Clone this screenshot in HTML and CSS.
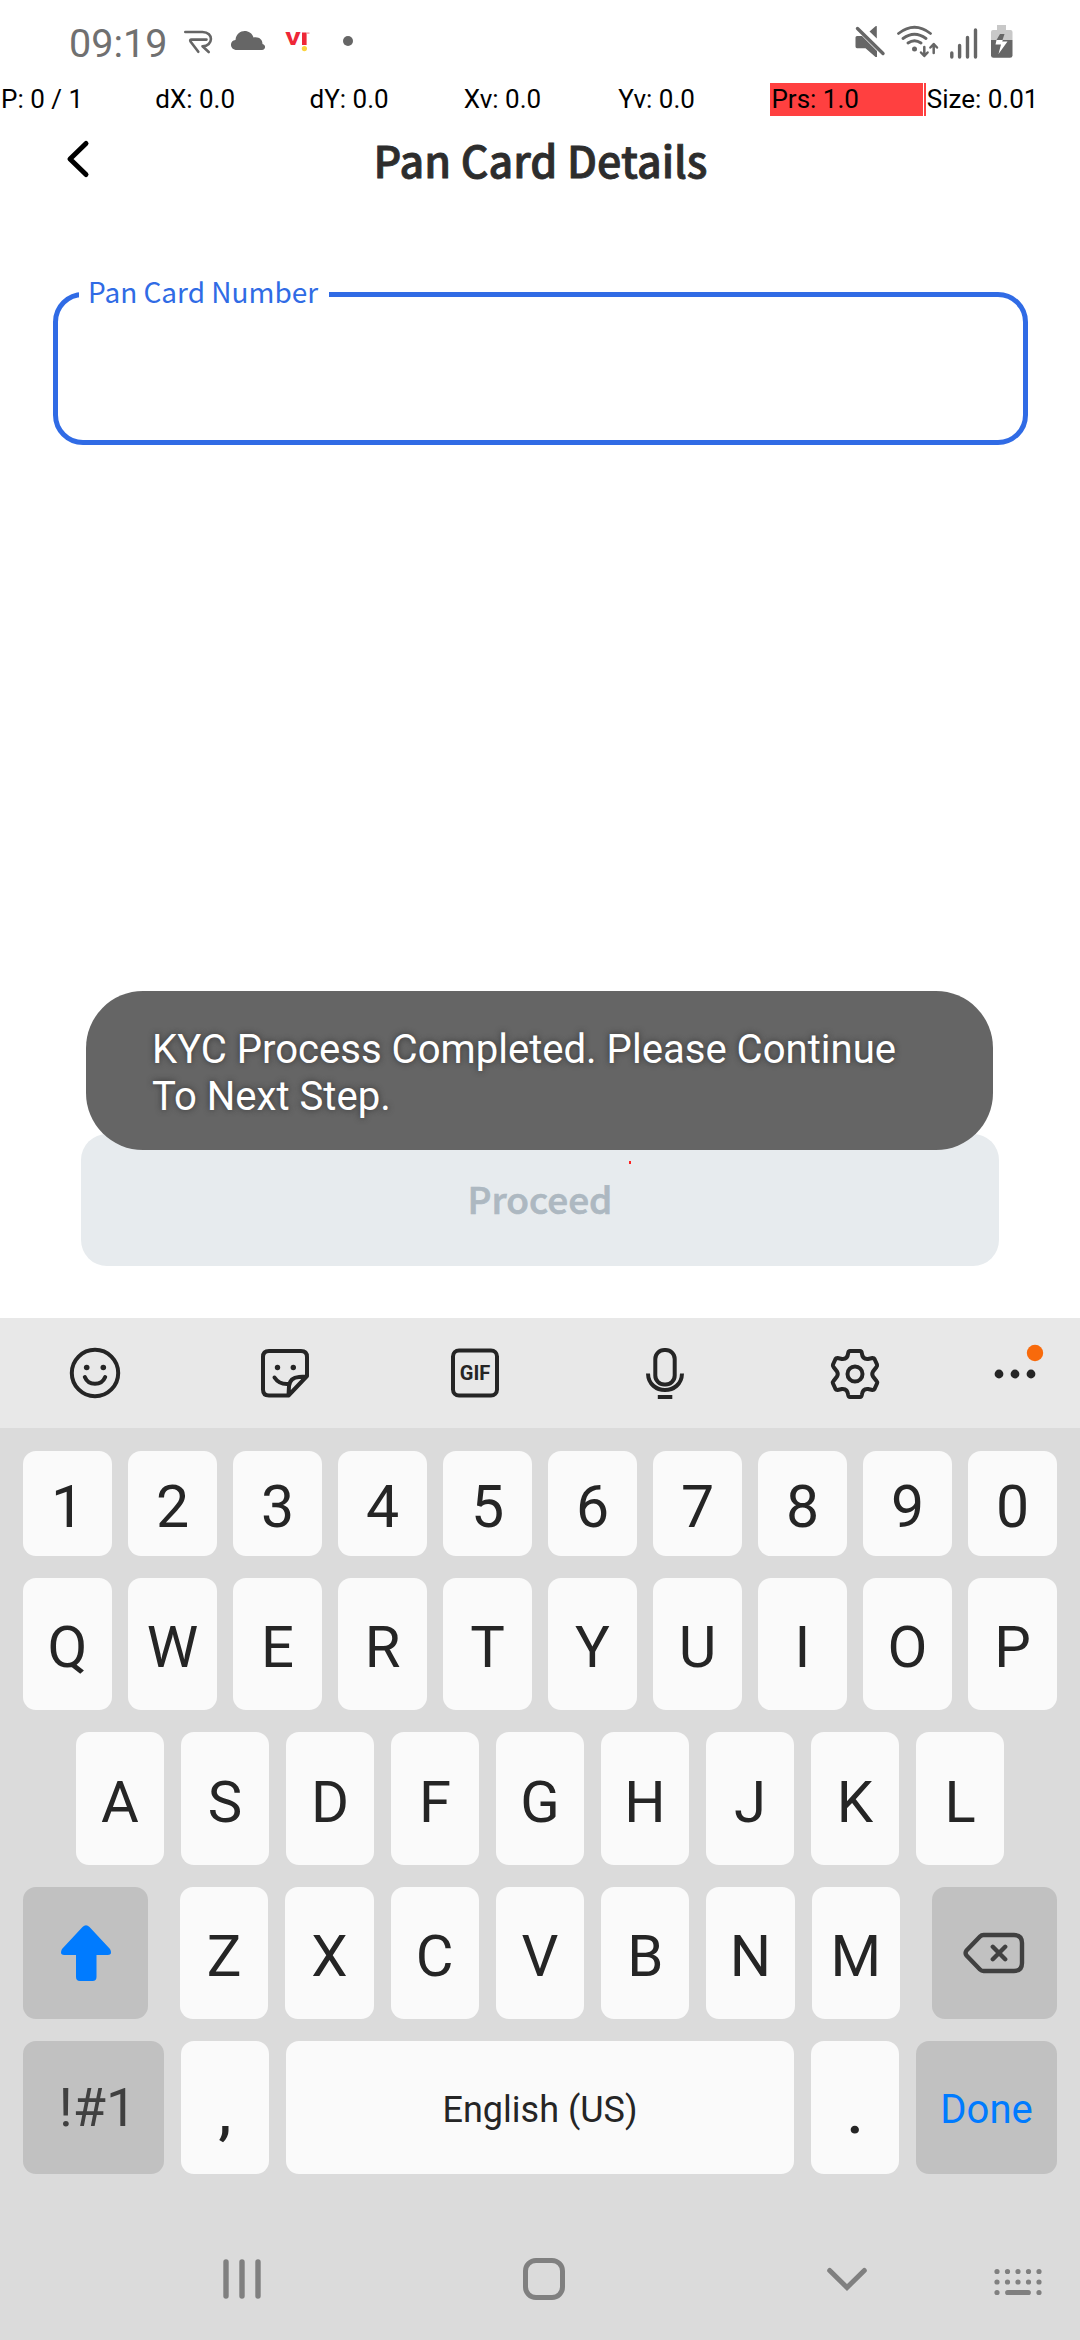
FILE: index.html
```html
<!DOCTYPE html>
<html lang="en">
<head>
<meta charset="utf-8">
<title>Pan Card Details</title>
<link rel="stylesheet" href="styles.css">
</head>
<body>
<div class="screen">
  <div class="status">
    <span class="time">09:19</span>
    <svg class="ic-r" width="32" height="28" viewBox="182 28 32 28" fill="none" stroke="#666" stroke-width="2.6" stroke-linecap="round" stroke-linejoin="round"><path d="M185.300 32H202.500C214 32 213.500 46 202.500 46.300L208.700 52M206.500 39.600H191.500Q189.500 39.600 190.500 41.500L198.300 51.800"/></svg>
    <svg class="ic-cloud" width="36" height="28" viewBox="230 28 36 28" fill="#666"><path d="M237 50C229.500 50 229 40.500 235.500 40C236.500 28.500 251 28.500 253.500 37.500C259 36.500 262.500 39.500 262.500 44C266.500 45 265.500 50 262 50Z"/></svg>
    <svg class="ic-vi" width="28" height="28" viewBox="284 28 28 28"><text class="vi-v" x="285.500" y="45.300" textLength="15" lengthAdjust="spacingAndGlyphs">V</text><rect x="302" y="32.500" width="4.600" height="12.500" fill="#ee2737"/><rect x="307" y="32.500" width="2.500" height="1.200" fill="#f08a92"/><circle cx="304.400" cy="48.600" r="2.600" fill="#fbd33c"/></svg>
    <svg class="ic-dot" width="12" height="28" viewBox="342 28 12 28"><circle cx="348" cy="41" r="5" fill="#666"/></svg>
    <div class="status-right">
      <svg width="34" height="36" viewBox="852 24 34 36" fill="#666"><path d="M855.500 37.500Q855.500 36 857 36H862L877 51V57L875.500 57L865.500 48.300H857Q855.500 48.300 855.500 46.500ZM876.800 26V38.500L869.500 31.500L875.500 26.300Z"/><path d="M860 27L885.500 52" stroke="#fff" stroke-width="2"/><path d="M857.500 28.500L883 53.500" stroke="#666" stroke-width="3.400" stroke-linecap="round"/></svg>
      <svg class="ic-wifi" width="48" height="36" viewBox="894 24 48 36" fill="none" stroke="#666" stroke-width="2.800" stroke-linecap="round"><path d="M898.500 33.500Q914.500 21 930.500 33.500M903 38.500Q914.500 30 926 38.500M908 43Q914.500 38.500 921 43"/><circle cx="914.500" cy="49" r="2.500" fill="#666" stroke="none"/><path d="M924.300 47V55M921 52.500L924.300 56L927.600 52.500M933.700 53V45M930.400 47.500L933.700 44L937 47.500" stroke-width="2.500" stroke-linejoin="round"/></svg>
      <svg class="ic-signal" width="32" height="36" viewBox="948 24 32 36" stroke="#666" stroke-width="3.400" stroke-linecap="round"><path d="M951.800 53V57M959.600 45.500V57M967.500 37.500V57M975.500 30V57"/></svg>
      <svg class="ic-battery" width="27" height="36" viewBox="988 24 27 36"><path d="M997 25H1006V30H1010.500Q1012.500 30 1012.500 32V40H991V32Q991 30 993 30H997Z" fill="#c8c8c8"/><path d="M991 40H1012.500V55.500Q1012.500 57.700 1010 57.700H993.500Q991 57.700 991 55.500Z" fill="#666"/><path d="M1000 34H1004.500L1002.500 40H996.500Z" fill="#666"/><path d="M996.500 40L995.500 44.500H1001L998.500 54L1007.500 41.500H1002.200L1002.800 40Z" fill="#fff"/></svg>
    </div>
  </div>

  <div class="pointer">
    <span>P: 0 / 1</span><span>dX: 0.0</span><span>dY: 0.0</span><span>Xv: 0.0</span><span>Yv: 0.0</span><span class="prs">Prs: 1.0</span><span>Size: 0.01</span>
  </div>

  <header class="header">
    <svg class="back" width="28" height="42" viewBox="64 138 28 42" fill="none" stroke="#000" stroke-width="5" stroke-linecap="round" stroke-linejoin="round"><path d="M86 143.500L70 159L86 174.500"/></svg>
    <h1>Pan Card Details</h1>
  </header>

  <main class="content">
    <div class="field"><label class="label">Pan Card Number</label></div>
    <div class="proceed">Proceed</div>
    <div class="toast">KYC Process Completed. Please Continue To Next Step.</div>
    <i class="touch"></i>
  </main>

  <section class="keyboard">
    <div class="tools">
      <svg width="190" height="110" viewBox="0 1318 190 110" fill="none" stroke="#252525" stroke-width="4" stroke-linecap="round"><circle cx="95" cy="1373" r="23.200"/><path d="M84.800 1377C88.500 1386 101.500 1386 105.200 1377"/><g fill="#252525" stroke="none"><circle cx="86.700" cy="1367.500" r="2.800"/><circle cx="103.300" cy="1367.500" r="2.800"/></g></svg>
      <svg width="190" height="110" viewBox="190 1318 190 110" fill="none" stroke="#252525" stroke-width="4" stroke-linecap="round" stroke-linejoin="round"><path d="M288.500 1395.500H269Q263 1395.500 263 1389.500V1357Q263 1351 269 1351H301Q307 1351 307 1357V1376L288.500 1395.500L289 1386Q290 1377.500 299 1377L306 1376.500M274.500 1377.500Q279 1384.500 288 1384"/><g fill="#252525" stroke="none"><circle cx="277.500" cy="1367.500" r="2.700"/><circle cx="293.300" cy="1367.500" r="2.700"/></g></svg>
      <svg width="190" height="110" viewBox="380 1318 190 110"><rect x="453" y="1350.500" width="44" height="45" rx="6" fill="none" stroke="#252525" stroke-width="4"/><text class="gif" x="475" y="1380" text-anchor="middle">GIF</text></svg>
      <svg width="190" height="110" viewBox="570 1318 190 110" fill="none" stroke="#252525" stroke-width="4"><rect x="655.300" y="1350" width="19.400" height="34.500" rx="9"/><path d="M648 1373.500C648.500 1395.500 681.500 1395.500 682 1373.500M657.800 1397H672.300"/></svg>
      <svg width="190" height="110" viewBox="760 1318 190 110" fill="none" stroke="#252525" stroke-width="4" stroke-linejoin="round"><circle cx="855" cy="1374" r="7.500"/><path d="M850 1351H860Q861.500 1351 861.800 1353Q862.500 1359.500 868 1359L872.500 1358Q874 1358 874.500 1359L877 1364.500Q877.500 1366 876.500 1367L873 1371.500Q871.500 1374 873 1376.500L876.500 1381Q877.500 1382 877 1383.500L874.500 1389Q874 1390 872.500 1390L868 1389Q862.500 1388.500 861.800 1395Q861.500 1397 860 1397H850Q848.500 1397 848.200 1395Q847.500 1388.500 842 1389L837.500 1390Q836 1390 835.500 1389L833 1383.500Q832.500 1382 833.500 1381L837 1376.500Q838.500 1374 837 1371.500L833.500 1367Q832.500 1366 833 1364.500L835.500 1359Q836 1358 837.500 1358L842 1359Q847.500 1359.500 848.200 1353Q848.500 1351 850 1351Z"/></svg>
      <svg width="130" height="110" viewBox="950 1318 130 110" fill="#252525"><circle cx="999" cy="1374" r="4.400"/><circle cx="1015" cy="1374" r="4.400"/><circle cx="1031" cy="1374" r="4.400"/><circle cx="1035" cy="1353" r="8.200" fill="#f86a0b"/></svg>
    </div>
    <div class="keys">
      <div class="row digits"><b>1</b><b>2</b><b>3</b><b>4</b><b>5</b><b>6</b><b>7</b><b>8</b><b>9</b><b>0</b></div>
      <div class="row top"><b>Q</b><b>W</b><b>E</b><b>R</b><b>T</b><b>Y</b><b>U</b><b>I</b><b>O</b><b>P</b></div>
      <div class="row home"><b>A</b><b>S</b><b>D</b><b>F</b><b>G</b><b>H</b><b>J</b><b>K</b><b>L</b></div>
      <div class="row bottom">
        <b class="fn shift"><svg width="56" height="60" viewBox="57.500 1924 56 60" fill="#007bff"><path d="M82 1928Q85.500 1924.500 89 1928L109.500 1950Q112.500 1955.500 107.500 1956H96V1978Q96 1982 92 1982H79.500Q75.500 1982 75.500 1978V1956H63.500Q58.500 1955.500 61.500 1950Z"/></svg></b>
        <b>Z</b><b>X</b><b>C</b><b>V</b><b>B</b><b>N</b><b>M</b>
        <b class="fn erase"><svg width="66" height="46" viewBox="961.500 1930 66 46" fill="none" stroke="#404040" stroke-width="4.400" stroke-linecap="round" stroke-linejoin="round"><path d="M984 1935H1014.500Q1022.500 1935 1022.500 1943V1963Q1022.500 1971 1014.500 1971H984Q982 1971 980.500 1969.500L967 1955.500Q965.200 1953 967 1950.500L980.500 1936.500Q982 1935 984 1935ZM993.300 1946.800L1005.700 1959.200M1005.700 1946.800L993.300 1959.200"/></svg></b>
      </div>
      <div class="row last"><b class="fn sym">!#1</b><b class="punct">,</b><b class="space">English (US)</b><b class="punct">.</b><b class="fn done">Done</b></div>
    </div>
    <nav class="nav">
      <svg width="48" height="60" viewBox="218 2249 48 60" stroke="#808080" stroke-width="5.400" stroke-linecap="round"><path d="M226 2262V2296M242 2262V2296M258 2262V2296"/></svg>
      <svg class="n-home" width="60" height="60" viewBox="514 2249 60 60"><rect x="525.500" y="2260.500" width="37" height="37" rx="10.500" fill="none" stroke="#808080" stroke-width="5"/></svg>
      <svg class="n-down" width="60" height="60" viewBox="817 2249 60 60" fill="none" stroke="#808080" stroke-width="5" stroke-linecap="round"><path d="M829.700 2270.500L847 2287.500L864.300 2270.500"/></svg>
      <svg class="n-kb" width="60" height="60" viewBox="988 2249 60 60" fill="none" stroke="#808080" stroke-width="5.200" stroke-linecap="round"><path d="M997 2271.500h0M1007.500 2271.500h0M1018 2271.500h0M1028.500 2271.500h0M1039 2271.500h0M997 2282h0M1007.500 2282h0M1018 2282h0M1028.500 2282h0M1039 2282h0M997 2292.500h0M1007.700 2292.500H1028.300M1039 2292.500h0"/></svg>
    </nav>
  </section>
</div>
</body>
</html>
```
FILE: styles.css
```css
* { box-sizing: border-box; }
body { margin: 0; background: #fff; font-family: Roboto, sans-serif; }
svg { display: block; flex: none; }

.screen {
  width: 1080px;
  height: 2340px;
  display: flex;
  flex-direction: column;
  overflow: hidden;
}

/* status bar */
.status {
  height: 83px;
  display: flex;
  align-items: flex-start;
  padding: 24px 65px 0 69px;
}
.time {
  width: 113px;
  font-size: 39.5px;
  line-height: 39px;
  font-weight: 400;
  color: #707070;
}
.ic-r, .ic-cloud, .ic-vi, .ic-dot { margin-top: 4px; }
.ic-cloud { margin-left: 16px; }
.ic-vi { margin-left: 18px; }
.ic-dot { margin-left: 30px; }
.vi-v { font: 900 17.5px Roboto, sans-serif; fill: #ee2737; }
.gif { font: 700 20px Roboto, sans-serif; fill: #252525; }
.status-right { margin-left: auto; display: flex; }
.ic-wifi { margin-left: 8px; }
.ic-signal { margin-left: 6px; }
.ic-battery { margin-left: 8px; }

/* pointer read-out strip */
.pointer {
  height: 32px;
  display: grid;
  grid-template-columns: repeat(7, 1fr);
  font-size: 26px;
  line-height: 33px;
  color: #000;
  white-space: nowrap;
}
.pointer span { padding-left: 1px; }
.pointer .prs {
  background: linear-gradient(90deg, #ff4040 153px, #fff 153px, #fff 154px, #ff4040 154px);
  margin-left: -1px;
}

.header {
  height: 93px;
  display: flex;
  align-items: flex-start;
  padding: 23px 64px 0;
}
.header h1 {
  flex: 1;
  margin: -4px 27px 0 0;
  text-align: center;
  font: 500 43px/50px "Noto Sans CJK SC", sans-serif;
  -webkit-text-stroke: 0.8px #2d2d2d;
  color: #2d2d2d;
}

.content {
  position: relative;
  height: 1110px;
  padding: 84px 52px 52px 53px;
  display: flex;
  flex-direction: column;
  justify-content: space-between;
}
.field {
  height: 153px;
  border: 5px solid #306be5;
  border-radius: 30px;
}
.label {
  display: block;
  width: 250px;
  margin: -26px 0 0 21px;
  padding-left: 9px;
  background: #fff;
  font: 400 28px/40px "Noto Sans CJK SC", sans-serif;
  color: #306be5;
  white-space: nowrap;
}
.proceed {
  height: 132px;
  margin: 0 29px 0 28px;
  border-radius: 26px;
  background: #e7ebee;
  color: #adb8c1;
  text-align: center;
  font: 500 37px/128px "Noto Sans CJK SC", sans-serif;
  -webkit-text-stroke: 0.7px #adb8c1;
}
.toast {
  position: absolute;
  left: 86px;
  top: 783px;
  width: 907px;
  height: 159px;
  padding: 35px 66px;
  border-radius: 57px;
  background: #656565;
  color: #fff;
  font-size: 40.100px;
  line-height: 47px;
  text-shadow: 0 0 6px #333;
}
.touch {
  position: absolute;
  left: 629px;
  top: 953px;
  width: 2px;
  height: 3px;
  background: #f22;
}

/* keyboard */
.keyboard { flex: 1; background: #dbdbdb; display: flex; flex-direction: column; }
.tools { height: 110px; display: flex; background: #e8e8e8; }
.keys {
  padding: 23px 23px 0;
  display: flex;
  flex-direction: column;
  gap: 22px;
}
.row { display: flex; gap: 16px; height: 132px; }
.row b {
  flex: 1;
  display: flex;
  align-items: center;
  justify-content: center;
  padding-top: 6px;
  border-radius: 13px;
  background: #fafafa;
  color: #252525;
  font-size: 58px;
  font-weight: 400;
}
.digits { height: 105px; }
.digits b { font-size: 59px; }
.home { height: 133px; gap: 17px; padding: 0 53px; }
.bottom { gap: 17px; }
.row .fn { background: #c1c1c1; color: #404040; flex: none; padding-top: 0; }
.row .shift { width: 125px; margin-right: 15px; }
.row .erase { width: 125px; margin-left: 15px; }
.last { height: 133px; gap: 17px; }
.row .sym { width: 141px; font-size: 54px; padding: 0 0 0 8px; }
.row .punct { flex: 0 0 88px; padding-top: 10px; font-size: 60px; font-weight: 500; }
.row .space { font-size: 36px; padding-top: 4px; }
.row .done { width: 141px; font-size: 40px; color: #007bff; padding-top: 3px; }

.nav { display: flex; padding: 75px 32px 0 218px; }
.n-home { margin-left: 248px; }
.n-down { margin-left: 243px; }
.n-kb { margin-left: 111px; }
```
